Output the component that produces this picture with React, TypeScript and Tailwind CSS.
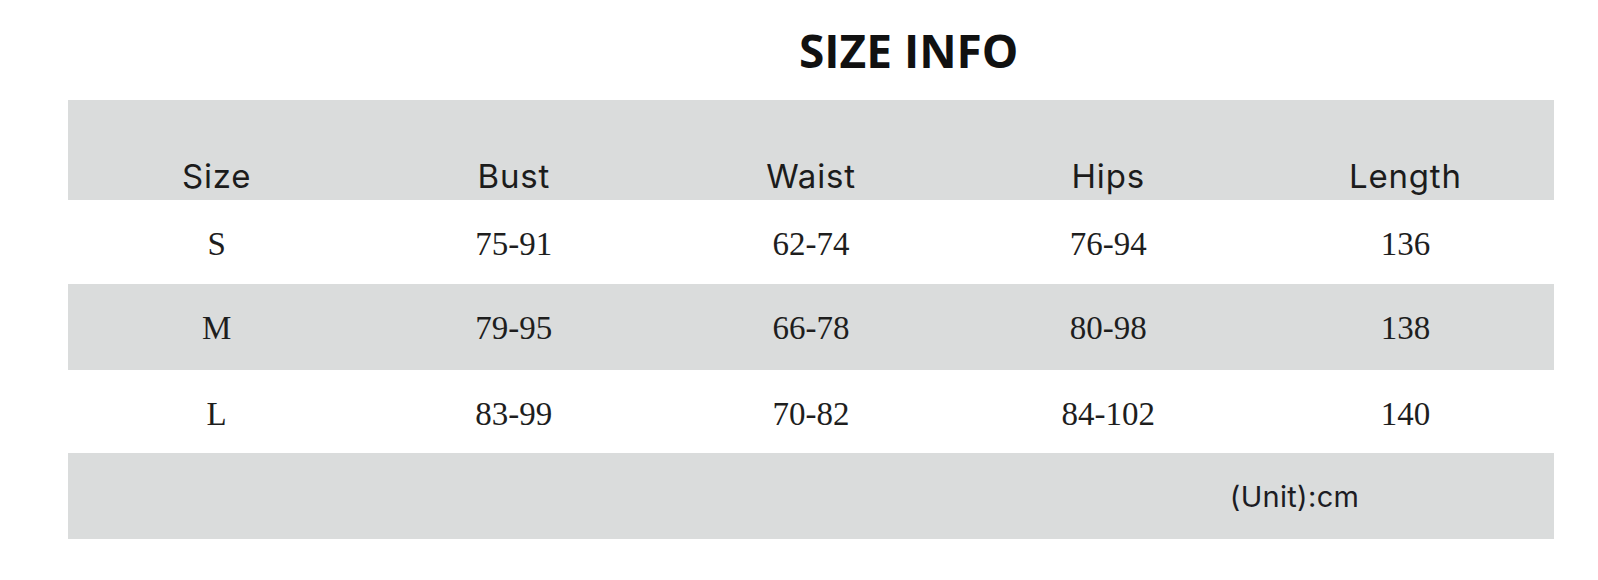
import React from "react";

const rows = [
  { size: "S", bust: "75-91", waist: "62-74", hips: "76-94", length: "136", gray: false, h: "h-[84px]" },
  { size: "M", bust: "79-95", waist: "66-78", hips: "80-98", length: "138", gray: true, h: "h-[86px]" },
  { size: "L", bust: "83-99", waist: "70-82", hips: "84-102", length: "140", gray: false, h: "h-[83px]" },
];

const headers = ["Size", "Bust", "Waist", "Hips", "Length"];

export default function App() {
  return (
    <div className="w-[1598px] h-[580px] bg-white overflow-hidden">
      <div className="h-[100px] pt-[27px] pl-[799px]">
        <h1
          className="text-[46px] leading-[46px] font-bold text-[#111111]"
          style={{ fontFamily: '"Open Sans", "Liberation Sans", sans-serif' }}
        >
          SIZE INFO
        </h1>
      </div>
      <div className="ml-[68px] w-[1486px]">
        <div
          className="grid grid-cols-5 h-[100px] bg-[#dadcdc] pt-[56px] text-[33px] leading-[40px] tracking-[0.8px] text-[#1c1c1c]"
          style={{ fontFamily: 'Inter, "Liberation Sans", sans-serif' }}
        >
          {headers.map((h) => (
            <div key={h} className="text-center">
              {h}
            </div>
          ))}
        </div>
        {rows.map((r) => (
          <div
            key={r.size}
            className={`grid grid-cols-5 ${r.h} ${r.gray ? "bg-[#dadcdc]" : "bg-white"} pt-[26px] text-[33px] leading-[36px] text-[#1e1e1e]`}
            style={{ fontFamily: '"Liberation Serif", "Times New Roman", serif' }}
          >
            <div className="text-center">{r.size}</div>
            <div className="text-center">{r.bust}</div>
            <div className="text-center">{r.waist}</div>
            <div className="text-center">{r.hips}</div>
            <div className="text-center">{r.length}</div>
          </div>
        ))}
        <div
          className="grid grid-cols-5 h-[86px] bg-[#dadcdc] pt-[26px] text-[29px] leading-[35px] tracking-[0.3px] text-[#1c1c24]"
          style={{ fontFamily: 'Inter, "Liberation Sans", sans-serif' }}
        >
          <div className="col-start-5 -ml-[27px] whitespace-nowrap">(Unit):cm</div>
        </div>
      </div>
    </div>
  );
}
